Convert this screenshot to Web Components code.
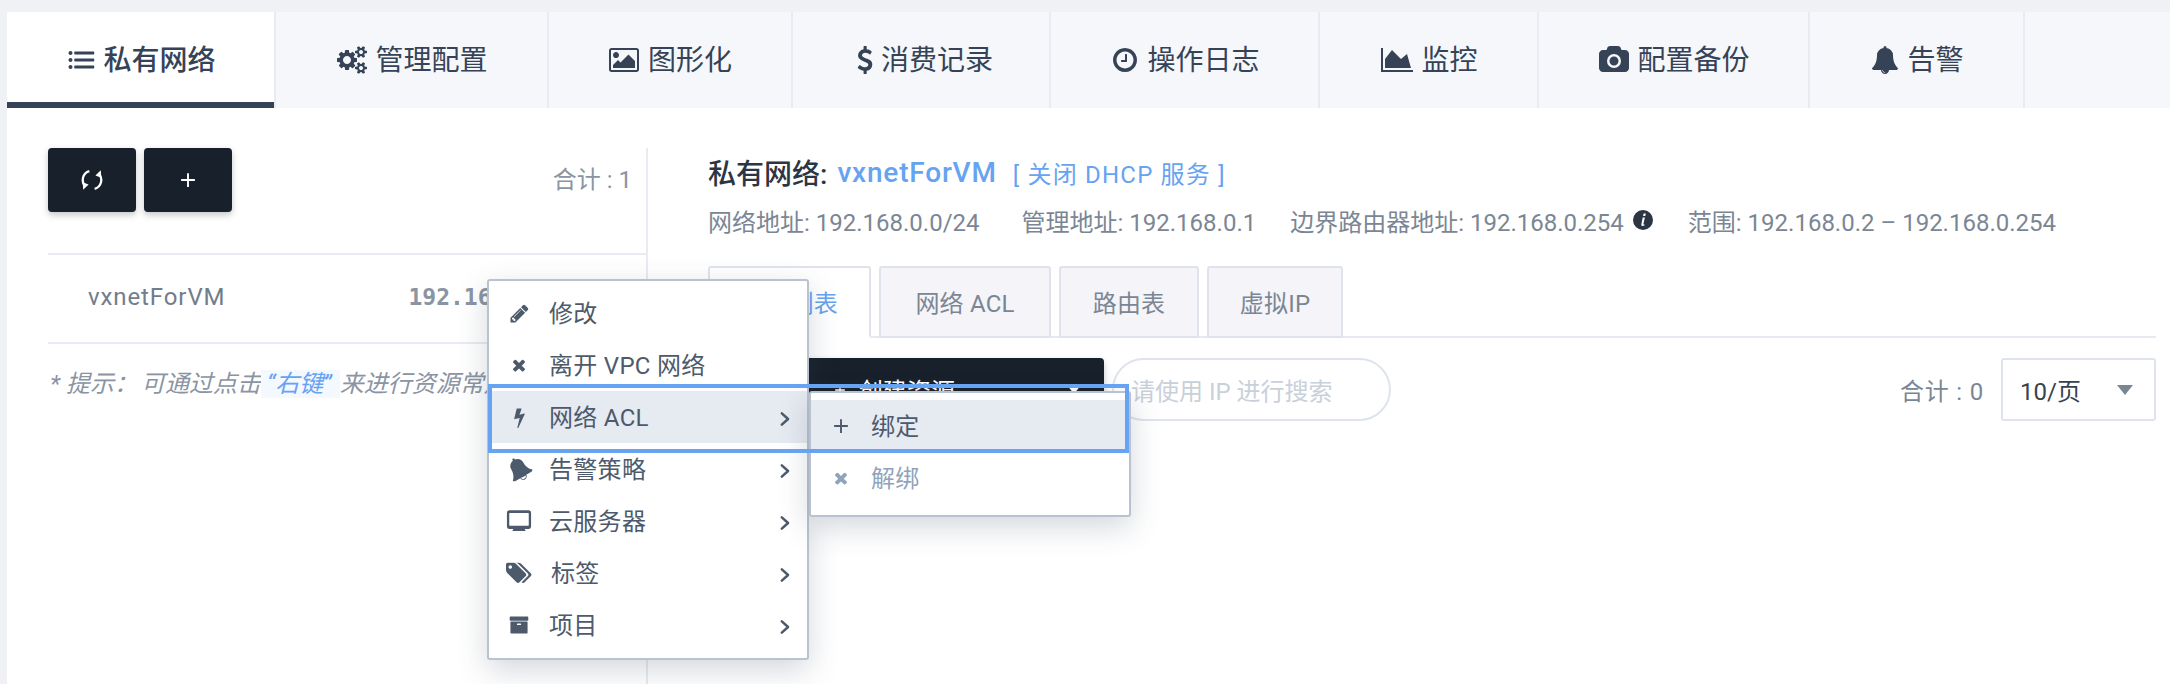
<!DOCTYPE html>
<html lang="zh-CN">
<head>
<meta charset="utf-8">
<title>私有网络</title>
<style>
    html, body { margin: 0; background: #eff1f5; }
    body { font-family: "Roboto", "Noto Sans CJK SC", sans-serif; height: 684px; overflow: hidden; }
</style>
</head>
<body>
<net-page>
    <main-tabs>
        <main-tab active icon="list" style="width:269px">私有网络</main-tab>
        <main-tab icon="cogs" style="width:273px">管理配置</main-tab>
        <main-tab icon="picture" style="width:244px">图形化</main-tab>
        <main-tab icon="dollar" style="width:258px">消费记录</main-tab>
        <main-tab icon="clock" style="width:269px">操作日志</main-tab>
        <main-tab icon="area" style="width:219px">监控</main-tab>
        <main-tab icon="camera" style="width:271px">配置备份</main-tab>
        <main-tab icon="bell" style="width:215px">告警</main-tab>
    </main-tabs>
    <net-body>
        <vxnet-list slot="left"></vxnet-list>
        <vxnet-detail slot="right"></vxnet-detail>
    </net-body>
    <ctx-menu style="left:487px;top:279px">
        <ctx-item icon="pencil">修改</ctx-item>
        <ctx-item icon="times">离开 VPC 网络</ctx-item>
        <ctx-item icon="bolt" arrow active>网络 ACL
            <ctx-menu slot="sub" sub>
                <ctx-item icon="plus" active sub>绑定</ctx-item>
                <ctx-item icon="times" disabled sub>解绑</ctx-item>
            </ctx-menu>
        </ctx-item>
        <ctx-item icon="bellalt" arrow>告警策略</ctx-item>
        <ctx-item icon="desktop" arrow>云服务器</ctx-item>
        <ctx-item icon="tags" arrow tight>标签</ctx-item>
        <ctx-item icon="archive" arrow>项目</ctx-item>
    </ctx-menu>
    <focus-box style="left:488px;top:384px"></focus-box>
</net-page>

<script>
// font awesome 4 outlines, 1792 grid
const ICONS = {
    list: [1792, 'M224 320a128 128 0 1 0 .1 0zM224 768a128 128 0 1 0 .1 0zM224 1216a128 128 0 1 0 .1 0zM512 352h1184q48 0 48 48v96q0 48-48 48H512q-48 0-48-48v-96q0-48 48-48zM512 800h1184q48 0 48 48v96q0 48-48 48H512q-48 0-48-48v-96q0-48 48-48zM512 1248h1184q48 0 48 48v96q0 48-48 48H512q-48 0-48-48v-96q0-48 48-48z'],
    cogs: [1920, 'M896 896q0-106-75-181t-181-75-181 75-75 181 75 181 181 75 181-75 75-181zm768 512q0-52-38-90t-90-38-90 38-38 90q0 53 37.5 90.5t90.5 37.5 90.5-37.5 37.5-90.5zm0-1024q0-52-38-90t-90-38-90 38-38 90q0 53 37.5 90.5t90.5 37.5 90.5-37.5 37.5-90.5zm-384 421v185q0 10-7 19.5t-16 10.5l-155 24q-11 35-32 76 34 48 90 115 7 11 7 20 0 12-7 19-23 30-82.5 89.5t-78.5 59.5q-11 0-21-7l-115-90q-37 19-77 31-11 108-23 155-7 24-30 24h-186q-11 0-20-7.5t-10-17.5l-23-153q-34-10-75-31l-118 89q-7 7-20 7-11 0-21-8-144-133-144-160 0-9 7-19 10-14 41-53t47-61q-23-44-35-82l-152-24q-10-1-17-9.5t-7-19.5v-185q0-10 7-19.5t16-10.5l155-24q11-35 32-76-34-48-90-115-7-11-7-20 0-12 7-20 22-30 82-89t79-59q11 0 21 7l115 90q34-18 77-32 11-108 23-154 7-24 30-24h186q11 0 20 7.5t10 17.5l23 153q34 10 75 31l118-89q8-7 20-7 11 0 21 8 144 133 144 160 0 8-7 19-12 16-42 54t-45 60q23 48 34 82l152 23q10 2 17 10.5t7 19.5zm640 533v140q0 16-149 31-12 27-30 52 51 113 51 138 0 4-4 7-122 71-124 71-8 0-46-47t-52-68q-20 2-30 2t-30-2q-14 21-52 68t-46 47q-2 0-124-71-4-3-4-7 0-25 51-138-18-25-30-52-149-15-149-31v-140q0-16 149-31 13-29 30-52-51-113-51-138 0-4 4-7 4-2 35-20t59-34 30-16q8 0 46 46.5t52 67.5q20-2 30-2t30 2q51-71 92-112l6-2q4 0 124 70 4 3 4 7 0 25-51 138 17 23 30 52 149 15 149 31zm0-1024v140q0 16-149 31-12 27-30 52 51 113 51 138 0 4-4 7-122 71-124 71-8 0-46-47t-52-68q-20 2-30 2t-30-2q-14 21-52 68t-46 47q-2 0-124-71-4-3-4-7 0-25 51-138-18-25-30-52-149-15-149-31v-140q0-16 149-31 13-29 30-52-51-113-51-138 0-4 4-7 4-2 35-20t59-34 30-16q8 0 46 46.5t52 67.5q20-2 30-2t30 2q51-71 92-112l6-2q4 0 124 70 4 3 4 7 0 25-51 138 17 23 30 52 149 15 149 31z'],
    picture: [1920, 'M576 576q0 80-56 136t-136 56-136-56-56-136 56-136 136-56 136 56 56 136zm1024 384v448h-1408v-192l320-320 160 160 512-512zm96-704h-1600q-13 0-22.5 9.5t-9.5 22.5v1216q0 13 9.5 22.5t22.5 9.5h1600q13 0 22.5-9.5t9.5-22.5v-1216q0-13-9.5-22.5t-22.5-9.5zm160 32v1216q0 66-47 113t-113 47h-1600q-66 0-113-47t-47-113v-1216q0-66 47-113t113-47h1600q66 0 113 47t47 113z'],
    dollar: [1408, 'M1362 1185q0 153-99.5 263.5t-258.5 136.5v175q0 14-9 23t-23 9h-135q-13 0-22.5-9.5t-9.5-22.5v-175q-66-9-127.5-31t-101.5-44.5-74-48-46.5-37.5-17.5-18q-17-21-2-41l103-135q7-10 23-12 15-2 24 9l2 2q113 99 243 125 37 8 74 8 81 0 142.5-43t61.5-122q0-28-15-53t-33.5-42-58.5-37.5-66-32-80-32.5q-39-16-61.5-25t-61.5-26.5-62.5-31-56.5-35.5-53.5-42.5-43.5-49-35.5-58-21-66.5-8.5-78q0-138 98-242t255-134v-180q0-13 9.5-22.5t22.5-9.5h135q14 0 23 9t9 23v176q57 6 110.5 23t87 33.5 63.5 37.5 39 29 15 14q17 18 5 38l-81 146q-8 15-23 16-14 3-27-7-3-3-14.5-12t-39-26.5-58.5-32-74.5-26-85.5-11.5q-95 0-155 43t-60 111q0 26 8.5 48t29.5 41.5 39.5 33 56 31 60.5 27 70 27.5q53 20 81 31.5t76 35 75.5 42.5 62 50 53 63.5 31.5 76.5 13 94z'],
    clock: [1792, 'M1024 544v448q0 14-9 23t-23 9h-320q-14 0-23-9t-9-23v-64q0-14 9-23t23-9h224v-352q0-14 9-23t23-9h64q14 0 23 9t9 23zm416 352q0-148-73-273t-198-198-273-73-273 73-198 198-73 273 73 273 198 198 273 73 273-73 198-198 73-273zm224 0q0 209-103 385.5t-279.5 279.5-385.5 103-385.5-103-279.5-279.5-103-385.5 103-385.5 279.5-279.5 385.5-103 385.5 103 279.5 279.5 103 385.5z'],
    area: [2048, 'M2048 1536v128h-2048v-1536h128v1408h1920zm-384-1024l256 896h-1664v-576l448-576 576 576z'],
    camera: [1920, 'M960 672q119 0 203.5 84.5t84.5 203.5-84.5 203.5-203.5 84.5-203.5-84.5-84.5-203.5 84.5-203.5 203.5-84.5zm704-416q106 0 181 75t75 181v896q0 106-75 181t-181 75h-1408q-106 0-181-75t-75-181v-896q0-106 75-181t181-75h224l51-136q19-49 69.5-84.5t103.5-35.5h512q53 0 103.5 35.5t69.5 84.5l51 136h224zm-704 1152q185 0 316.5-131.5t131.5-316.5-131.5-316.5-316.5-131.5-316.5 131.5-131.5 316.5 131.5 316.5 316.5 131.5z'],
    bell: [1792, 'M912 1696q0-16-16-16-59 0-101.5-42.5t-42.5-101.5q0-16-16-16t-16 16q0 73 51.5 124.5t124.5 51.5q16 0 16-16zm816-288q0 52-38 90t-90 38h-448q0 106-75 181t-181 75-181-75-75-181h-448q-52 0-90-38t-38-90q50-42 91-88t85-119.5 74.5-158.5 50-206 19.5-260q0-152 117-282.5t307-158.5q-8-19-8-39 0-40 28-68t68-28 68 28 28 68q0 20-8 39 190 28 307 158.5t117 282.5q0 139 19.5 260t50 206 74.5 158.5 85 119.5 91 88z'],
    pencil: [1792, 'M491 1536l91-91-235-235-91 91v107h128v128h107zm523-928q0-22-22-22-10 0-17 7l-542 542q-7 7-7 17 0 22 22 22 10 0 17-7l542-542q7-7 7-17zm-54-192l416 416-832 832h-416v-416zm683 96q0 53-37 90l-166 166-416-416 166-165q36-38 90-38 53 0 91 38l235 234q37 39 37 91z'],
    times: [1792, 'M1490 1322q0 40-28 68l-136 136q-28 28-68 28t-68-28l-294-294-294 294q-28 28-68 28t-68-28l-136-136q-28-28-28-68t28-68l294-294-294-294q-28-28-28-68t28-68l136-136q28-28 68-28t68 28l294 294 294-294q28-28 68-28t68 28l136 136q28 28 28 68t-28 68l-294 294 294 294q28 28 28 68z'],
    bolt: [1792, 'M1333 566q18 20 7 44l-540 1157q-13 25-42 25-4 0-14-2-17-5-25.5-19t-4.5-30l197-808-406 101q-4 1-12 1-18 0-31-11-18-15-13-39l201-825q4-14 16-23t28-9h328q19 0 32 12.5t13 29.5q0 8-5 18l-171 463 396-98q8-2 12-2 19 0 34 15z'],
    tags: [1920, 'M448 448q0-53-37.5-90.5t-90.5-37.5-90.5 37.5-37.5 90.5 37.5 90.5 90.5 37.5 90.5-37.5 37.5-90.5zm1067 576q0 53-37 90l-491 492q-39 37-91 37-53 0-90-37l-715-716q-38-37-64.5-101t-26.5-117v-416q0-52 38-90t90-38h416q53 0 117 26.5t102 64.5l715 714q37 39 37 91zm384 0q0 53-37 90l-491 492q-39 37-91 37-36 0-59-14t-53-45l470-470q37-37 37-90 0-52-37-91l-715-714q-38-38-102-64.5t-117-26.5h224q53 0 117 26.5t102 64.5l715 714q37 39 37 91z'],
    archive: [1792, 'M1088 832q0-26-19-45t-45-19h-256q-26 0-45 19t-19 45 19 45 45 19h256q26 0 45-19t19-45zm576-192v960q0 26-19 45t-45 19h-1408q-26 0-45-19t-19-45v-960q0-26 19-45t45-19h1408q26 0 45 19t19 45zm64-448v256q0 26-19 45t-45 19h-1536q-26 0-45-19t-19-45v-256q0-26 19-45t45-19h1536q26 0 45 19t19 45z'],
    desktop: [1792, 'M240 160h1312q176 0 176 176v928q0 176-176 176h-272l80 140H432l80-140H240q-176 0-176-176V336q0-176 176-176zm16 180q-32 0-32 32v816q0 32 32 32h1280q32 0 32-32V372q0-32-32-32z']
};

class UiIcon extends HTMLElement {
    constructor() {
        super();
        this.attachShadow({ mode: 'open' });
    }

    connectedCallback() {
        const name = this.getAttribute('name');
        const size = Number(this.getAttribute('size') || 24);
        let shape = '';
        let box = 1792;
        if (ICONS[name]) {
            box = ICONS[name][0];
            shape = `<path fill="currentColor" d="${ICONS[name][1]}"/>`;
        } else if (name === 'bellalt') {
            shape = `<g transform="rotate(-30 896 896)"><path fill="currentColor" d="${ICONS.bell[1]}"/><path fill="#fff" d="M700 1560a196 150 0 0 0 392 0z"/></g>`;
        } else if (name === 'plus') {
            shape = '<path fill="none" stroke="currentColor" stroke-width="170" d="M896 280v1232M280 896h1232"/>';
        } else if (name === 'chevron') {
            shape = '<path fill="none" stroke="currentColor" stroke-width="280" stroke-linecap="round" stroke-linejoin="round" d="M540 260l700 636-700 636"/>';
        } else if (name === 'sync') {
            shape = '<g fill="none" stroke="currentColor" stroke-width="170"><path d="M700 230A680 680 0 0 0 420 1380"/><path d="M1092 1562A680 680 0 0 0 1372 412"/></g><path fill="currentColor" d="M200 1060L640 1240L240 1620zM1592 732L1152 552L1552 172z"/>';
        }
        this.shadowRoot.innerHTML = `
            <style>
                :host { display: inline-flex; width: ${size * box / 1792}px; height: ${size}px; flex: none; }
                svg { width: 100%; height: 100%; display: block; overflow: visible; }
            </style>
            <svg viewBox="0 0 ${box} 1792">${shape}</svg>
        `;
    }
}

class NetPage extends HTMLElement {
    constructor() {
        super();
        this.attachShadow({ mode: 'open' });
        this.shadowRoot.innerHTML = `
            <style>
                :host { display: block; position: relative; padding: 12px 0 0 7px; }
            </style>
            <slot></slot>
        `;
    }
}

class MainTabs extends HTMLElement {
    constructor() {
        super();
        this.attachShadow({ mode: 'open' });
        this.shadowRoot.innerHTML = `
            <style>
                :host { display: flex; height: 96px; background: #f5f7fb; }
            </style>
            <slot></slot>
        `;
    }
}

class MainTab extends HTMLElement {
    constructor() {
        super();
        this.attachShadow({ mode: 'open' });
    }

    connectedCallback() {
        const active = this.hasAttribute('active');
        this.shadowRoot.innerHTML = `
            <style>
                :host {
                    display: flex;
                    align-items: center;
                    justify-content: center;
                    gap: 8px;
                    box-sizing: border-box;
                    flex: none;
                    padding-left: 2px;
                    color: #364357;
                    font-size: 28px;
                    border-right: 2px solid #e8ebf1;
                    ${active ? 'background:#fff;box-shadow:inset 0 -6px 0 #364357;font-weight:500;' : ''}
                }
                span { padding-bottom: 4px; }
            </style>
            <ui-icon name="${this.getAttribute('icon')}" size="28"></ui-icon>
            <span><slot></slot></span>
        `;
    }
}

class NetBody extends HTMLElement {
    constructor() {
        super();
        this.attachShadow({ mode: 'open' });
        this.shadowRoot.innerHTML = `
            <style>
                :host {
                    display: grid;
                    grid-template-columns: 641px 1fr;
                    height: 576px;
                    background: #fff;
                }
            </style>
            <slot name="left"></slot>
            <slot name="right"></slot>
        `;
    }
}

class VxnetList extends HTMLElement {
    constructor() {
        super();
        this.attachShadow({ mode: 'open' });
        this.shadowRoot.innerHTML = `
            <style>
                :host { display: block; padding: 40px 0 0 41px; color: #8a94a3; }
                .side {
                    border-right: 2px solid #e8ebf1;
                    height: 100%;
                }
                .bar {
                    display: flex;
                    align-items: flex-start;
                    gap: 8px;
                    height: 105px;
                    border-bottom: 2px solid #e8ebf1;
                    padding-right: 14px;
                }
                .btn {
                    width: 88px;
                    height: 64px;
                    display: flex;
                    align-items: center;
                    justify-content: center;
                    background: #18202b;
                    color: #fff;
                    border-radius: 4px;
                    box-shadow: 0 3px 6px rgba(24,32,43,.25);
                }
                .total {
                    margin-left: auto;
                    line-height: 64px;
                    font-size: 24px;
                }
                .row {
                    display: flex;
                    align-items: center;
                    height: 87px;
                    border-bottom: 2px solid #e8ebf1;
                    margin-right: 2px;
                    padding-left: 40px;
                    font-size: 24px;
                    color: #727d8c;
                    letter-spacing: .9px;
                }
                .row span { padding-bottom: 4px; }
                .row .ip {
                    margin-left: 183px;
                    white-space: nowrap;
                    font-family: "DejaVu Sans Mono", monospace;
                    font-weight: 700;
                    font-size: 23px;
                    color: #8a94a3;
                    letter-spacing: 0;
                }
                .hint {
                    margin-top: 23px;
                    padding-left: 2px;
                    font-size: 24px;
                    font-style: italic;
                    line-height: 34px;
                    color: #8a94a3;
                    white-space: nowrap;
                    overflow: hidden;
                }
                .hint b { font-weight: 400; margin-left: 3px; }
                .hint em { color: #66a3f2; background: #f4f8ff; padding: 0 8px 0 6px; }
            </style>
            <div class="side">
                <div class="bar">
                    <div class="btn"><ui-icon name="sync" size="24"></ui-icon></div>
                    <div class="btn"><ui-icon name="plus" size="20"></ui-icon></div>
                    <div class="total">合计 : 1</div>
                </div>
                <div class="row"><span>vxnetForVM</span><span class="ip">192.16</span></div>
                <div class="hint">* 提示：<b>可通过点击</b><em>“右键”</em>来进行资源常用操作</div>
            </div>
        `;
    }
}

class VxnetDetail extends HTMLElement {
    constructor() {
        super();
        this.attachShadow({ mode: 'open' });
        this.shadowRoot.innerHTML = `
            <style>
                :host { display: block; padding: 48px 14px 0 60px; }
                .title {
                    display: flex;
                    align-items: center;
                    height: 32px;
                    font-size: 28px;
                    font-weight: 500;
                    color: #2b3544;
                    white-space: nowrap;
                }
                .title a { color: #66a3f2; margin-left: 10px; letter-spacing: .8px; }
                .title i { color: #66a3f2; font-style: normal; font-weight: 400; font-size: 24px; margin-left: 16px; letter-spacing: 1.2px; }
                .info {
                    display: flex;
                    align-items: center;
                    height: 30px;
                    margin-top: 17px;
                    font-size: 24px;
                    color: #7b8694;
                    white-space: nowrap;
                }
                .info span { margin-right: 42px; display: inline-flex; align-items: center; gap: 9px; }
                .tabs {
                    display: flex;
                    gap: 8px;
                    height: 72px;
                    margin-top: 31px;
                    border-bottom: 2px solid #e6eaf0;
                    box-sizing: border-box;
                }
                .tab {
                    box-sizing: border-box;
                    height: 72px;
                    display: flex;
                    align-items: center;
                    justify-content: center;
                    padding-bottom: 2px;
                    background: #f4f4f9;
                    border: 2px solid #dfe4ec;
                    border-radius: 3px 3px 0 0;
                    font-size: 24px;
                    letter-spacing: .2px;
                    color: #7b8694;
                }
                .tab.on { background: #fff; color: #66a3f2; border-bottom-color: #fff; }
                .tools {
                    display: flex;
                    align-items: stretch;
                    height: 63px;
                    margin-top: 20px;
                }
                .create {
                    width: 396px;
                    display: flex;
                    align-items: center;
                    padding-left: 125px;
                    gap: 12px;
                    box-sizing: border-box;
                    border-radius: 4px;
                    background: #18202b;
                    color: #fff;
                    font-size: 24px;
                    box-shadow: 0 3px 6px rgba(24,32,43,.25);
                }
                .create b { margin-left: 100px; width: 0; height: 0; border: 7px solid transparent; border-top: 9px solid #fff; border-bottom: 0; }
                .search {
                    width: 279px;
                    margin-left: 8px;
                    display: flex;
                    align-items: center;
                    padding-left: 17px;
                    box-sizing: border-box;
                    border: 2px solid #dfe4ec;
                    border-radius: 32px;
                    color: #c9d0da;
                    font-size: 24px;
                }
                .count { margin-left: auto; margin-right: 17px; align-self: center; font-size: 24px; color: #7b8694; letter-spacing: .8px; }
                .select {
                    width: 155px;
                    display: flex;
                    align-items: center;
                    justify-content: space-between;
                    padding: 0 21px 0 17px;
                    box-sizing: border-box;
                    border: 2px solid #dfe4ec;
                    border-radius: 3px;
                    font-size: 24px;
                    color: #39424f;
                }
                .select b { width: 0; height: 0; border: 8px solid transparent; border-top: 10px solid #7b8694; border-bottom: 0; }
            </style>
            <div class="title">私有网络:<a>vxnetForVM</a><i>[ 关闭 DHCP 服务 ]</i></div>
            <div class="info">
                <span>网络地址: 192.168.0.0/24</span>
                <span style="margin-right:34px">管理地址: 192.168.0.1</span>
                <span style="margin-right:35px">边界路由器地址: 192.168.0.254
                    <svg width="20" height="20" viewBox="0 0 20 20"><circle cx="10" cy="10" r="10" fill="#2b3544"/><path fill="#fff" d="M10.600 3.500h2.200l-.5 2.400h-2.200zM9.700 7.500h2.200l-1.500 6.600q-.1.600.6.500l.6-.2-.2 1-1.700.5q-1.700.2-1.400-1.300z"/></svg>
                </span>
                <span style="margin:0">范围: 192.168.0.2 – 192.168.0.254</span>
            </div>
            <div class="tabs">
                <div class="tab on" style="width:163px">资源列表</div>
                <div class="tab" style="width:172px">网络 ACL</div>
                <div class="tab" style="width:140px">路由表</div>
                <div class="tab" style="width:136px">虚拟IP</div>
            </div>
            <div class="tools">
                <div class="create"><ui-icon name="plus" size="14"></ui-icon><span>创建资源</span><b></b></div>
                <div class="search">请使用 IP 进行搜索</div>
                <div class="count">合计 : 0</div>
                <div class="select"><span>10/页</span><b></b></div>
            </div>
        `;
    }
}

class CtxMenu extends HTMLElement {
    constructor() {
        super();
        this.attachShadow({ mode: 'open' });
    }

    connectedCallback() {
        const sub = this.hasAttribute('sub');
        this.shadowRoot.innerHTML = `
            <style>
                :host {
                    display: block;
                    position: absolute;
                    box-sizing: border-box;
                    width: 322px;
                    padding: ${sub ? '7px 0 11px' : '6px 0 7px'};
                    background: #fff;
                    border: 2px solid #b9c3cf;
                    border-radius: 3px;
                    box-shadow: 0 10px 30px rgba(60,75,100,.22);
                    ${sub ? 'left: 100%; top: 0; margin-left: 2px; letter-spacing: 0;' : ''}
                }
            </style>
            <slot></slot>
        `;
    }
}

class CtxItem extends HTMLElement {
    constructor() {
        super();
        this.attachShadow({ mode: 'open' });
    }

    connectedCallback() {
        const active = this.hasAttribute('active');
        const disabled = this.hasAttribute('disabled');
        const icon = this.getAttribute('icon');
        const sizes = { pencil: 21, times: 18, bolt: 21, bellalt: 24, desktop: 26, tags: 24, archive: 20, plus: 20 };
        this.shadowRoot.innerHTML = `
            <style>
                :host {
                    display: flex;
                    align-items: center;
                    position: relative;
                    height: 52px;
                    box-sizing: border-box;
                    font-size: 24px;
                    letter-spacing: .3px;
                    color: ${disabled ? '#90a3bb' : '#4d5a6c'};
                    white-space: nowrap;
                    ${active ? 'background:#e6eaf1;' : ''}
                }
                .ico { width: 60px; display: flex; justify-content: center; }
                .label { padding-bottom: 3px; ${this.hasAttribute('tight') ? 'padding-left: 2px;' : ''} }
                .arrow { position: absolute; right: 14px; top: 14px; }
            </style>
            <div class="ico"><ui-icon name="${icon}" size="${sizes[icon]}"></ui-icon></div>
            <div class="label"><slot></slot></div>
            ${this.hasAttribute('arrow') ? '<div class="arrow"><ui-icon name="chevron" size="16"></ui-icon></div>' : ''}
            <slot name="sub"></slot>
        `;
    }
}

class FocusBox extends HTMLElement {
    constructor() {
        super();
        this.attachShadow({ mode: 'open' });
        this.shadowRoot.innerHTML = `
            <style>
                :host {
                    display: block;
                    position: absolute;
                    box-sizing: border-box;
                    width: 641px;
                    height: 69px;
                    border: 4px solid #66a3f2;
                    pointer-events: none;
                }
            </style>
        `;
    }
}

customElements.define('ui-icon', UiIcon);
customElements.define('net-page', NetPage);
customElements.define('main-tabs', MainTabs);
customElements.define('main-tab', MainTab);
customElements.define('net-body', NetBody);
customElements.define('vxnet-list', VxnetList);
customElements.define('vxnet-detail', VxnetDetail);
customElements.define('ctx-menu', CtxMenu);
customElements.define('ctx-item', CtxItem);
customElements.define('focus-box', FocusBox);
</script>
</body>
</html>
